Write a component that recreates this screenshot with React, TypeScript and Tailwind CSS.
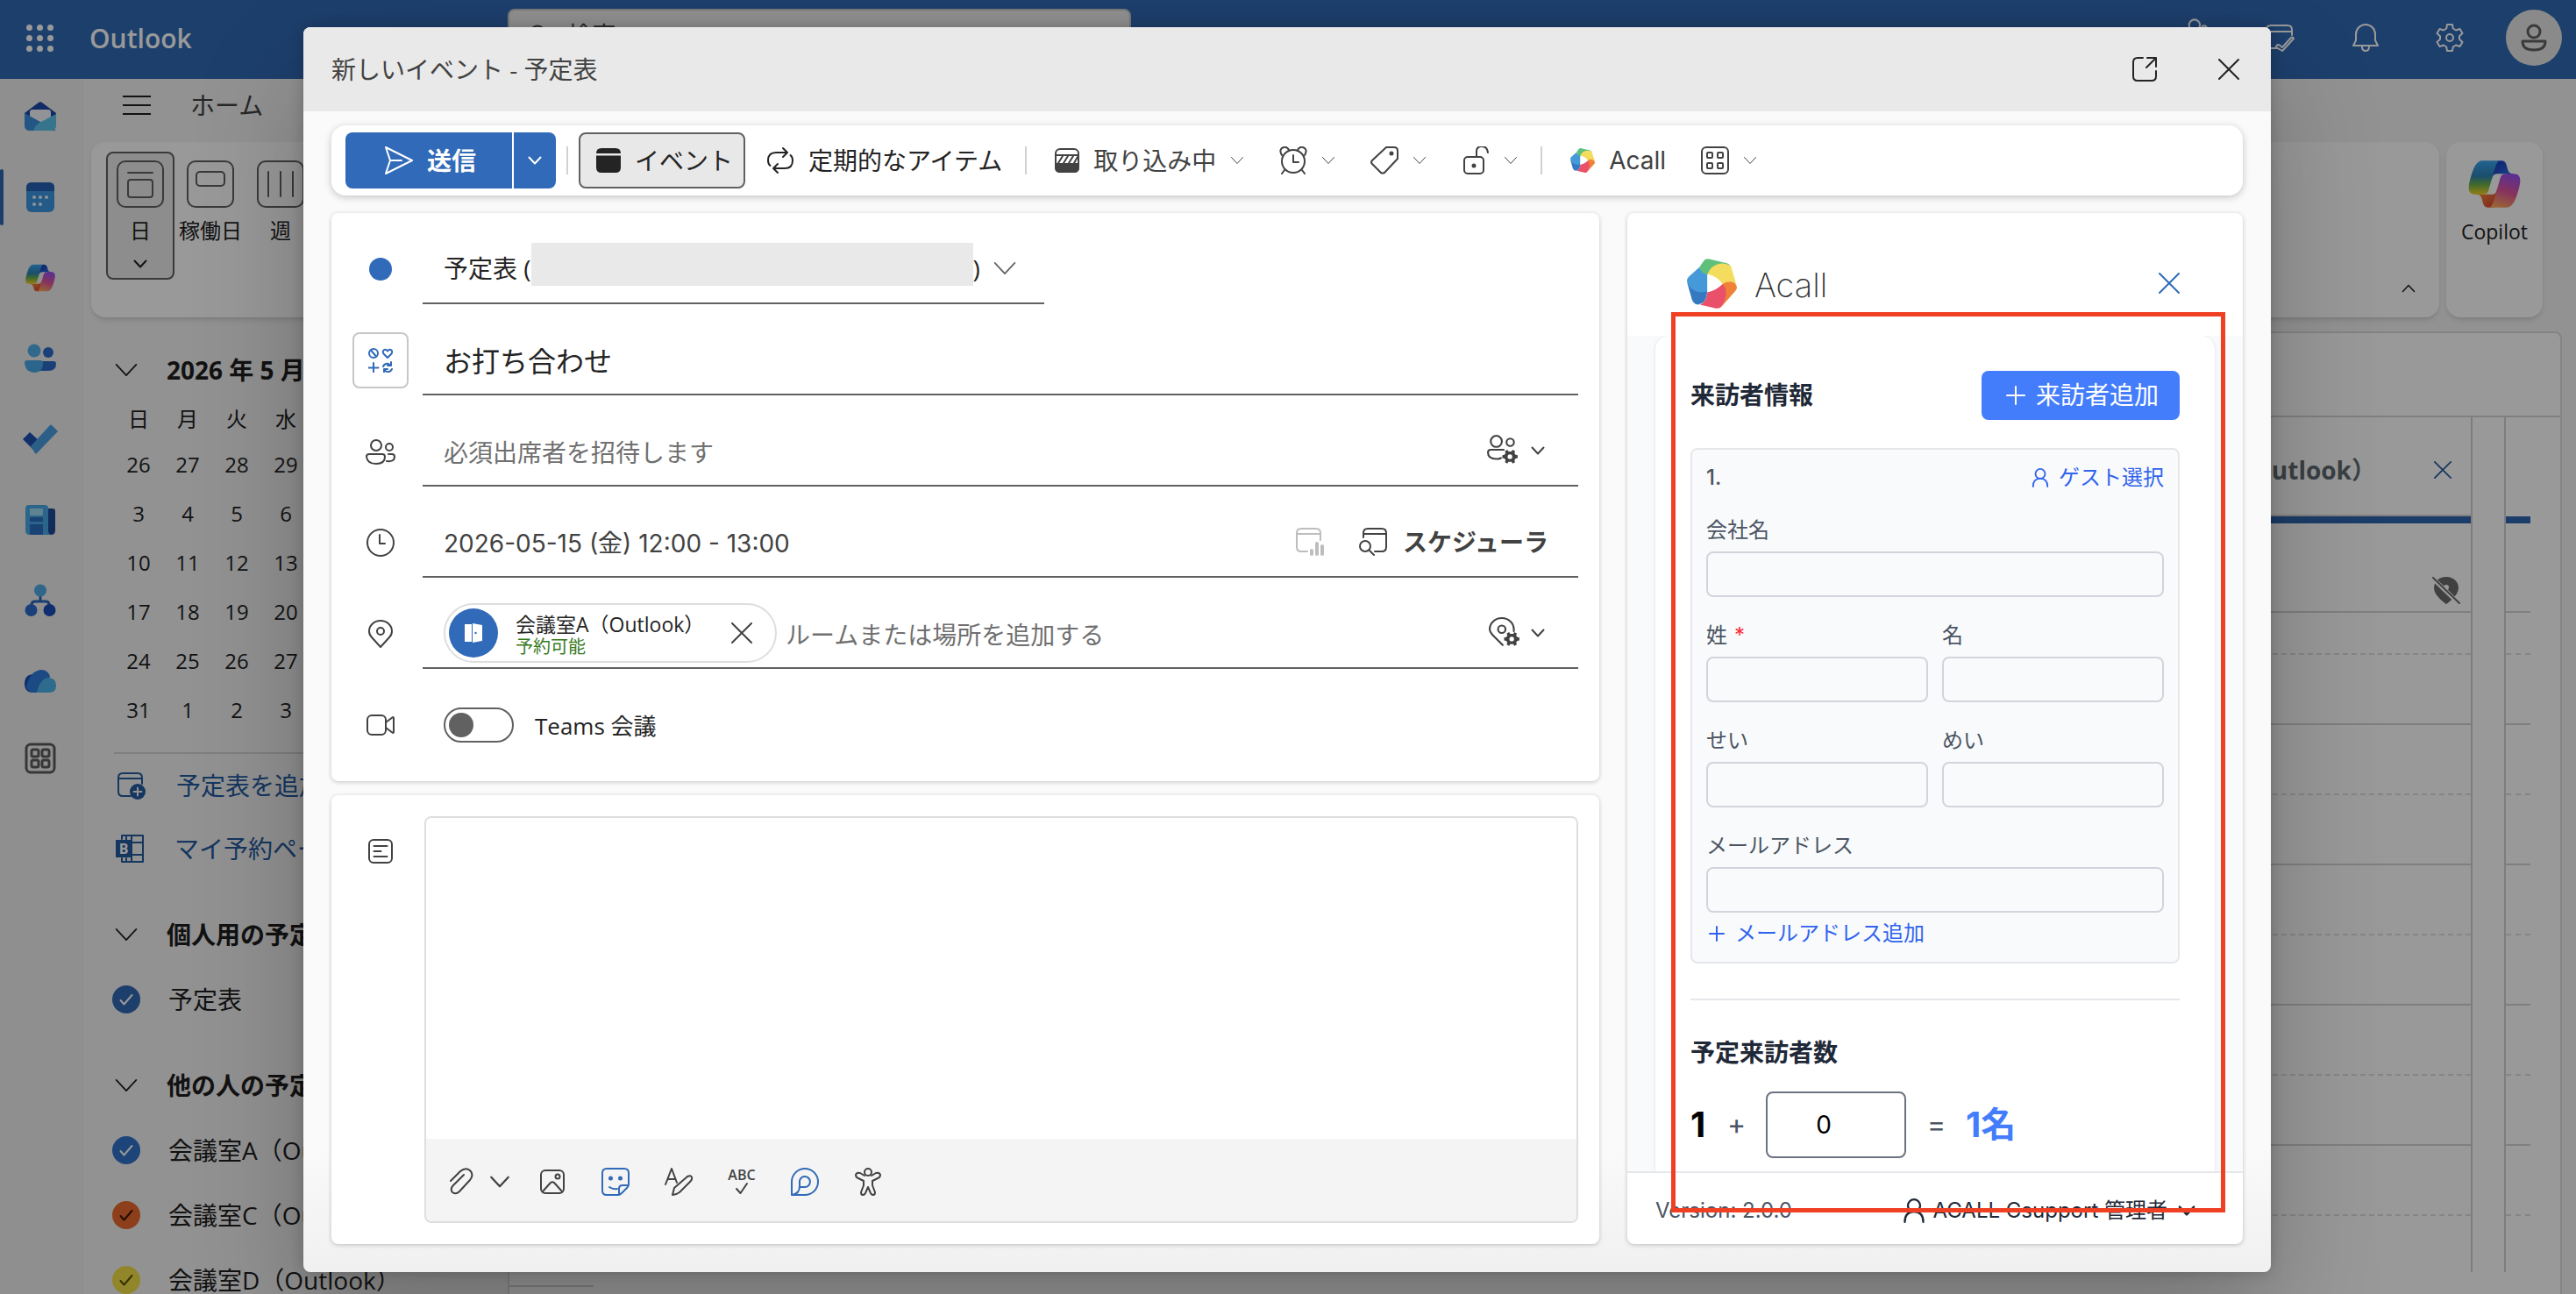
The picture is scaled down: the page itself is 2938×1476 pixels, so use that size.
import { useId, useState, type ReactNode } from "react";

type IconProps = { children: ReactNode; className?: string; sw?: number; box?: number };

/** Line icon drawn on a square grid, coloured by the current text colour. */
function Icon({ children, className = "size-8", sw = 2, box = 32 }: IconProps) {
  return (
    <svg
      viewBox={`0 0 ${box} ${box}`}
      className={`shrink-0 ${className}`}
      fill="none"
      stroke="currentColor"
      strokeWidth={sw}
      strokeLinecap="round"
      strokeLinejoin="round"
      aria-hidden="true"
    >
      {children}
    </svg>
  );
}

const Chevron = ({ className = "size-4", sw = 2 }: { className?: string; sw?: number }) => (
  <Icon className={className} box={16} sw={sw}>
    <path d="M1.5 4.5 8 11.5l6.5-7" />
  </Icon>
);

const Cross = ({ className = "size-6" }: { className?: string }) => (
  <Icon className={className} box={24}>
    <path d="m1 1 22 22M23 1 1 23" />
  </Icon>
);

/** Small solid cog that sits on the lower right corner of an icon. */
const Gear = () => (
  <g stroke="none">
    <path
      fill="currentColor"
      fillRule="evenodd"
      d="m22 16 1 2h3.500l1-2 2.700 1.500-.700 2.300 1.300 1.700 2.200.500v3l-2.200.500-1.300 1.700.700 2.300-2.700 1.500-1-2H23l-1 2-2.700-1.500.700-2.300-1.300-1.700-2.200-.500v-3l2.200-.500 1.300-1.700-.700-2.300zM24.700 21a2.500 2.500 0 1 0 0 5 2.500 2.500 0 0 0 0-5Z"
    />
  </g>
);

function CopilotLogo({ className }: { className: string }) {
  const id = useId().replace(/:/g, "");
  return (
    <svg viewBox="2 3 44 42" className={className} aria-hidden="true">
      <defs>
        <linearGradient id={`${id}a`} x1="0" y1="0" x2="0" y2="1">
          <stop offset="0" stopColor="#3aa5ee" />
          <stop offset=".45" stopColor="#2c83b8" />
          <stop offset=".7" stopColor="#6bb04a" />
          <stop offset="1" stopColor="#f5d327" />
        </linearGradient>
        <linearGradient id={`${id}b`} x1=".6" y1="0" x2=".3" y2="1">
          <stop offset="0" stopColor="#9a4ff0" />
          <stop offset=".5" stopColor="#e0559a" />
          <stop offset="1" stopColor="#ffa95c" />
        </linearGradient>
        <linearGradient id={`${id}c`} x1="1" y1="1" x2="0" y2="0">
          <stop offset="0" stopColor="#2f7de0" />
          <stop offset="1" stopColor="#1432b8" />
        </linearGradient>
        <linearGradient id={`${id}d`} x1="0" y1="0" x2="1" y2="1">
          <stop offset="0" stopColor="#f7a02d" />
          <stop offset="1" stopColor="#d93a3a" />
        </linearGradient>
      </defs>
      <path
        fill={`url(#${id}c)`}
        d="M34.14 7.325A4.63 4.63 0 0 0 29.7 4h-1.35a4.63 4.63 0 0 0-4.554 3.794L21.48 20.407l.575-1.965a4.63 4.63 0 0 1 4.444-3.33h7.853l3.294 1.282 3.175-1.283h-.926a4.63 4.63 0 0 1-4.443-3.325z"
      />
      <path
        fill={`url(#${id}d)`}
        d="M14.33 40.656A4.63 4.63 0 0 0 18.779 44h2.87a4.63 4.63 0 0 0 4.629-4.51l.312-12.163-.654 2.233a4.63 4.63 0 0 1-4.443 3.329h-7.919l-2.823-1.532-3.057 1.532h.912a4.63 4.63 0 0 1 4.447 3.344z"
      />
      <path
        fill={`url(#${id}a)`}
        d="M29.5 4H13.46c-4.583 0-7.332 6.057-9.165 12.113-2.172 7.177-5.013 16.775 3.208 16.775h6.925a4.63 4.63 0 0 0 4.455-3.358 2078 2078 0 0 1 4.971-17.156c.843-2.843 1.544-5.284 2.621-6.805C27.079 4.716 28.086 4 29.501 4"
      />
      <path
        fill={`url(#${id}b)`}
        d="M18.498 44h16.04c4.582 0 7.332-6.058 9.165-12.115 2.171-7.177 5.013-16.775-3.208-16.775h-6.926a4.63 4.63 0 0 0-4.454 3.358 2084 2084 0 0 1-4.972 17.16c-.842 2.842-1.544 5.283-2.62 6.803-.604.853-1.61 1.569-3.025 1.569"
      />
    </svg>
  );
}

function AcallLogo({ className }: { className: string }) {
  return (
    <svg viewBox="0 0 100 100" className={`shrink-0 ${className}`} aria-hidden="true">
      <path fill="#5fc07c" d="M25 17 34 4Q38-1 45 1L80 9Q84 10 86 14L60 26 41 32 30 36Z" />
      <path fill="#f4dc5e" d="M86 14Q87 10 90 22L99 52Q94 46 84 46L71 51Q62 36 41 31 47 14 66 10 78 8 86 14Z" />
      <path fill="#f08237" d="M71 51Q78 45 88 46 99 48 100 58 100 62 96 66L70 95Q66 100 62 99L60 70Z" />
      <path fill="#ea5069" d="M71 51Q79 57 78 72 77 86 68 96 63 101 56 99L26 92Q37 88 39 76L41 67Q58 64 71 51Z" />
      <path fill="#3579c1" d="M1 50 10 82Q14 92 22 92 36 90 39 76L41 64Z" />
      <path fill="#4599d8" d="M25 17Q28 30 41 32L41 66Q22 70 10 61 0 53 0 44 0 40 4 36Z" />
      <path fill="#fff" d="M41 31Q62 36 71 51 58 64 41 67Z" />
    </svg>
  );
}

/* ------------------------------ page behind the dialog ------------------------------ */

const railIcons: { label: string; art: ReactNode }[] = [
  {
    label: "メール",
    art: (
      <svg viewBox="0 0 36 34" className="h-[34px] w-9">
        <path fill="#1d48a8" d="M0 13 16 1q2-1.400 4 0l16 12v8H0z" />
        <path fill="#f4f6fb" d="M6 12q0-3 3-3h18q3 0 3 3v9l-12 6-12-6z" />
        <path fill="#3b8fdc" d="M0 13l36 20H6q-6 0-6-6z" />
        <path fill="#5bc4ea" d="M36 14v13q0 6-6 6H10q2-6 7-9z" />
      </svg>
    ),
  },
  {
    label: "予定表",
    art: (
      <svg viewBox="0 0 32 34" className="h-[34px] w-8">
        <rect width="32" height="34" rx="6" fill="#3d97e3" />
        <path fill="#2761b4" d="M0 10V6q0-6 6-6h20q6 0 6 6v4z" />
        <g fill="#eaf5ff">
          <circle cx="9" cy="17" r="2" />
          <circle cx="16" cy="17" r="2" />
          <circle cx="23" cy="17" r="2" />
          <circle cx="9" cy="25" r="2" />
          <circle cx="16" cy="25" r="2" />
        </g>
      </svg>
    ),
  },
  { label: "Copilot", art: <CopilotLogo className="h-8 w-[34px]" /> },
  {
    label: "連絡先",
    art: (
      <svg viewBox="0 0 36 34" className="h-[34px] w-9">
        <circle cx="27" cy="10" r="6" fill="#2a6dc9" />
        <path fill="#2a6dc9" d="M18 20h15q3 0 3 3 0 8-9 8h-9z" />
        <circle cx="11" cy="8" r="7.500" fill="#53b0ec" />
        <path fill="#4aa8e8" d="M3 19h15q3 0 3 3 0 11-10 11T0 22q0-3 3-3z" />
      </svg>
    ),
  },
  {
    label: "To Do",
    art: (
      <svg viewBox="0 0 40 34" className="h-[34px] w-10">
        <path fill="#1d4fae" d="m0 17 8-8 13 12-6 11z" />
        <path fill="#4a9fe2" d="m9 25 22-24q1-1 2 0l7 7-24 25q-1 1-2 0z" />
      </svg>
    ),
  },
  {
    label: "ニュース",
    art: (
      <svg viewBox="0 0 34 34" className="size-[34px]">
        <path fill="#1d4896" d="M22 4h9q3 0 3 3v22q0 5-5 5h-7z" />
        <path fill="#48a8e6" d="M0 4q0-4 4-4h18q4 0 4 4v25q0 4 3 5H5q-5 0-5-5z" />
        <rect x="5" y="4" width="15" height="8" rx="1" fill="#9ddcf5" />
        <rect x="5" y="14" width="15" height="5" rx="1" fill="#2a6fc4" />
        <rect x="5" y="22" width="15" height="12" rx="1" fill="#2a6fc4" />
      </svg>
    ),
  },
  {
    label: "組織図",
    art: (
      <svg viewBox="0 0 36 38" className="h-[38px] w-9">
        <path d="M18 14v6M8 27v-3q0-4 4-4h12q4 0 4 4v3" stroke="#2867bd" strokeWidth="3" fill="none" />
        <circle cx="18" cy="7.500" r="7" fill="#4fabe6" />
        <circle cx="7.500" cy="30" r="7" fill="#2b6ccb" />
        <circle cx="28.500" cy="30" r="7" fill="#1a4dbb" />
      </svg>
    ),
  },
  {
    label: "OneDrive",
    art: (
      <svg viewBox="0 0 36 26" className="h-[26px] w-9">
        <path fill="#1b4bb5" d="M0 16Q0 5 11 5l6 6-9 15Q0 25 0 16z" />
        <path fill="#2f7ddd" d="M2 20Q6 1 19 0q8 0 10 8L16 26H9q-5-1-7-6z" />
        <path fill="#4db2ea" d="M14 26q4-17 14-17 8 1 8 9 0 8-8 8z" />
      </svg>
    ),
  },
  {
    label: "アプリ",
    art: (
      <svg viewBox="0 0 36 36" className="size-9" fill="none" stroke="#5c5c5c" strokeWidth="3">
        <rect x="2" y="2" width="32" height="32" rx="5" />
        <rect x="8" y="8" width="8" height="8" rx="2" />
        <rect x="20" y="8" width="8" height="8" rx="2" />
        <rect x="8" y="20" width="8" height="8" rx="2" />
        <rect x="20" y="20" width="8" height="8" rx="2" />
      </svg>
    ),
  },
];

function TopBar() {
  return (
    <header className="flex h-[90px] shrink-0 items-center bg-[#3169b5] pb-1 text-white">
      <button type="button" aria-label="アプリ起動ツール" className="ml-[30px] grid grid-cols-3 gap-[5px]">
        {Array.from({ length: 9 }, (_, i) => (
          <span key={i} className="size-[7px] rounded-full bg-white" />
        ))}
      </button>
      <h1 className="ml-[41px] w-[477px] text-[30px] font-semibold">Outlook</h1>
      <label className="mt-[10px] flex h-[60px] w-[711px] items-center gap-5 self-start rounded-lg border-2 border-[#c8c8c8] bg-[#efefef] px-[22px] text-[#424242]">
        <Icon className="size-6" box={24}>
          <circle cx="10" cy="10" r="8.500" />
          <path d="m16 16 7 7" />
        </Icon>
        <input
          type="search"
          placeholder="検索"
          aria-label="検索"
          className="w-full bg-transparent text-[28px] outline-none placeholder:text-[#424242]"
        />
      </label>
      <div className="ml-auto flex items-center gap-16 pr-4">
        <button type="button" aria-label="Teams">
          <Icon className="size-11" sw={1.5}>
            <circle cx="21" cy="5.500" r="4.500" />
            <circle cx="29" cy="8" r="2" />
            <path d="M14 13h14v8q-7 8-14 0z" />
          </Icon>
        </button>
        <button type="button" aria-label="今日の予定">
          <Icon className="h-8 w-9">
            <path d="M14 28H6q-5 0-5-5V7q0-5 5-5h19q5 0 5 5v6M1 9h29" />
            <path d="m15 24 4 3L29 16q2-1 3 1L21 29l-2 2-7-4q0-3 3-3z" />
          </Icon>
        </button>
        <button type="button" aria-label="通知">
          <Icon>
            <path d="M2 25h28l-3-6v-7a11 11 0 0 0-22 0v7zM12 26q0 5 4 5t4-5" />
          </Icon>
        </button>
        <button type="button" aria-label="設定">
          <Icon>
            <circle cx="16" cy="16" r="4" />
            <path d="m13 1-.800 4.500L9 7.500 4.500 6l-3 5L5 14.200v3.600L1.500 21l3 5 4.500-1.500 3.200 2L13 31h6l.800-4.500 3.200-2 4.500 1.500 3-5-3.500-3.200v-3.600L30.500 11l-3-5L23 7.500l-3.200-2L19 1z" />
          </Icon>
        </button>
        <button
          type="button"
          aria-label="アカウント"
          className="-ml-4 flex size-16 items-center justify-center rounded-full bg-[#e6e6e6] text-[#616161]"
        >
          <Icon className="size-8" sw={3}>
            <circle cx="16" cy="9" r="7" />
            <path d="M3 20h26q0 10-13 10T3 20z" />
          </Icon>
        </button>
      </div>
    </header>
  );
}

function ViewButton({ label, active, children }: { label: string; active?: boolean; children: ReactNode }) {
  return (
    <button
      type="button"
      className={
        active
          ? "flex h-[146px] w-[78px] flex-col items-center rounded-lg border-2 border-[#616161] bg-[#ebebeb] pt-2"
          : "flex h-[146px] w-[78px] flex-col items-center border-y-2 border-transparent pt-2"
      }
    >
      <span className="text-[#616161]">
        <Icon className="size-[54px]" box={54}>
          <rect x="1" y="1" width="52" height="52" rx="9" />
          {children}
        </Icon>
      </span>
      <span className="mt-2.5 text-2xl leading-8 whitespace-nowrap">{label}</span>
      {active && <Chevron className="mt-3.5 size-4" />}
    </button>
  );
}

function Ribbon() {
  return (
    <div className="flex h-[200px] shrink-0 gap-2 pr-[38px] pl-2">
      <div className="flex flex-1 justify-between rounded-2xl bg-white shadow-md">
        <div className="flex gap-0.5 pt-[11px] pl-[17px]">
          <ViewButton label="日" active>
            <path d="M13 14h28" />
            <rect x="13" y="22" width="28" height="20" rx="3" />
          </ViewButton>
          <ViewButton label="稼働日">
            <rect x="11" y="13" width="32" height="16" rx="4" />
          </ViewButton>
          <ViewButton label="週">
            <path d="M13 13v28M27 13v28M41 13v28" />
          </ViewButton>
        </div>
        <button type="button" aria-label="リボンを折りたたむ" className="mr-[27px] mb-[25px] rotate-180 self-end">
          <Chevron sw={1.5} />
        </button>
      </div>
      <button type="button" className="flex w-[110px] flex-col items-center rounded-2xl bg-white pt-5 shadow-md">
        <CopilotLogo className="h-[56px] w-[60px]" />
        <span className="mt-2 text-[23px] leading-9">Copilot</span>
      </button>
    </div>
  );
}

const weekdays = ["日", "月", "火", "水", "木", "金", "土"];
const weeks = [
  [26, 27, 28, 29, 30, 1, 2],
  [3, 4, 5, 6, 7, 8, 9],
  [10, 11, 12, 13, 14, 15, 16],
  [17, 18, 19, 20, 21, 22, 23],
  [24, 25, 26, 27, 28, 29, 30],
  [31, 1, 2, 3, 4, 5, 6],
];

function CalendarEntry({ name, color, mark }: { name: string; color: string; mark: string }) {
  return (
    <label className="flex h-[74px] shrink-0 items-center gap-8 pl-6">
      <input type="checkbox" defaultChecked className="peer sr-only" />
      <span className={`flex size-8 items-center justify-center rounded-full ${color} ${mark}`}>
        <Icon className="size-4" box={16}>
          <path d="m1.500 9 4 4.500L14.500 3" />
        </Icon>
      </span>
      <span className="whitespace-nowrap">{name}</span>
    </label>
  );
}

function GroupHeader({ name, className }: { name: string; className: string }) {
  return (
    <button type="button" className={`flex shrink-0 items-center gap-8 pl-[26px] font-bold ${className}`}>
      <Chevron className="size-7" sw={1} />
      <span className="whitespace-nowrap">{name}</span>
    </button>
  );
}

function Sidebar() {
  return (
    <aside className="flex w-[483px] shrink-0 flex-col pl-2 text-[28px] text-[#1f1f1f]">
      <GroupHeader name="2026 年 5 月" className="h-[76px] pt-3" />
      <table className="ml-[26px] w-[392px] shrink-0 table-fixed text-center text-2xl">
        <thead>
          <tr className="h-12">
            {weekdays.map((d) => (
              <th key={d} className="p-0 font-normal">{d}</th>
            ))}
          </tr>
        </thead>
        <tbody>
          {weeks.map((w, i) => (
            <tr key={i} className="h-14">
              {w.map((d, j) => (
                <td key={j} className="p-0">{d}</td>
              ))}
            </tr>
          ))}
        </tbody>
      </table>
      <hr className="mt-5 mr-4 ml-[26px] border-t-2 border-[#d4d4d4]" />
      <a href="#add" className="flex h-[72px] shrink-0 items-center gap-[35px] pl-[30px] text-[#245a9f]">
        <Icon>
          <path d="M15 28H6q-5 0-5-5V7q0-5 5-5h17q5 0 5 5v7M1 8h27" />
          <circle cx="23" cy="23" r="9" fill="currentColor" stroke="none" />
          <path d="M23 18.500v9M18.500 23h9" stroke="#f3f3f3" />
        </Icon>
        <span className="whitespace-nowrap">予定表を追加</span>
      </a>
      <a href="#bookings" className="flex h-[72px] shrink-0 items-center gap-[35px] pl-7 text-[#245a9f]">
        <span className="relative">
          <Icon>
            <path d="M7 5V1h24v30H7v-4M12 1v5M18 1v30M12 27v4M18 9h13M18 23h13" />
          </Icon>
          <span className="absolute top-1.5 left-0 flex h-5 w-[18px] items-center justify-center bg-[#245a9f] text-[16px] leading-5 font-bold text-white">
            B
          </span>
        </span>
        <span className="whitespace-nowrap">マイ予約ページ</span>
      </a>
      <GroupHeader name="個人用の予定表" className="mt-[25px] h-[74px]" />
      <CalendarEntry name="予定表" color="bg-[#3169b5]" mark="text-white" />
      <GroupHeader name="他の人の予定表" className="mt-6 h-[74px]" />
      <CalendarEntry name="会議室A（Outlook）" color="bg-[#3273cc]" mark="text-white" />
      <CalendarEntry name="会議室C（Outlook）" color="bg-[#ea6a2c]" mark="text-[#3d1400]" />
      <CalendarEntry name="会議室D（Outlook）" color="bg-[#f4df48]" mark="text-[#5a5000]" />
    </aside>
  );
}

function DayColumn({ children, className }: { children?: ReactNode; className: string }) {
  return (
    <div className={`flex flex-col border-[#d0d0d0] ${className}`}>
      {children}
      <div className="h-12 shrink-0 border-b-2 border-dashed border-[#dedede]" />
      {[0, 1, 2, 3].map((i) => (
        <div key={i} className="shrink-0">
          <div className="h-20 border-b-2 border-[#d4d4d4]" />
          <div className="h-20 border-b-2 border-dashed border-[#dedede]" />
        </div>
      ))}
    </div>
  );
}

function CalendarGrid() {
  return (
    <main className="mr-4 flex flex-1 flex-col rounded-t-lg border-2 border-b-0 border-[#dcdcdc] bg-white">
      <div className="h-[96px] shrink-0 border-b-2 border-[#d4d4d4]" />
      <div className="flex min-h-0 flex-1 overflow-hidden">
        <DayColumn className="flex-1 border-r-2">
          <div className="flex h-[113px] shrink-0 items-center justify-end gap-[66px] border-b-2 border-[#d4d4d4] pt-2 pr-[22px] text-[28px] font-bold text-[#616b70]">
            <span className="whitespace-nowrap">（Outlook）</span>
            <button type="button" aria-label="予定表を閉じる" className="text-[#245a9f]">
              <Cross className="size-5" />
            </button>
          </div>
          <div className="flex h-[110px] shrink-0 items-end justify-end border-t-8 border-b-2 border-t-[#2f66b0] border-b-[#d4d4d4] pr-3 pb-2 text-[#6b6b6b]">
            <Icon>
              <path
                fill="currentColor"
                d="M16 2C8 2 3 7 3 14c0 6 5 11 13 17 8-6 13-11 13-17 0-7-5-12-13-12z"
              />
              <circle cx="16" cy="13" r="4" fill="#fff" />
              <path d="m2 4 28 27" stroke="#fff" strokeWidth="5" />
              <path d="m1 2 30 29" />
            </Icon>
          </div>
        </DayColumn>
        <div className="w-9" />
        <DayColumn className="mr-[34px] w-[30px] overflow-hidden border-l-2">
          <div className="h-[113px] shrink-0" />
          <div className="h-[110px] shrink-0 border-t-8 border-b-2 border-t-[#2f66b0] border-b-[#d4d4d4]" />
        </DayColumn>
      </div>
      <div className="h-[25px] shrink-0">
        <div className="h-[17px] w-24 border-b-2 border-[#d4d4d4]" />
      </div>
    </main>
  );
}

function Page() {
  return (
    <div className="flex h-full flex-col overflow-hidden bg-[#f3f3f3]">
      <TopBar />
      <div className="flex min-h-0 flex-1">
        <nav className="w-24 shrink-0 bg-[#eeeeee]">
          {railIcons.map(({ label, art }, i) => (
            <a
              key={label}
              href="#rail"
              aria-label={label}
              className={
                i === railIcons.length - 1
                  ? "flex h-[84px] items-center justify-center pr-1 pb-1.5"
                  : "flex h-[92px] items-center justify-center pr-1 pb-1.5"
              }
            >
              <span className={i === 1 ? "mr-[26px] -ml-[30px] h-16 w-1 rounded bg-[#2f66b0]" : "hidden"} />
              {art}
            </a>
          ))}
        </nav>
        <div className="flex min-w-0 flex-1 flex-col">
          <div className="flex h-[72px] shrink-0 items-center pb-3 pl-11">
            <button type="button" aria-label="ナビゲーション" className="flex w-8 flex-col gap-2">
              <span className="h-0.5 bg-[#1f1f1f]" />
              <span className="h-0.5 bg-[#1f1f1f]" />
              <span className="h-0.5 bg-[#1f1f1f]" />
            </button>
            <button type="button" className="ml-[45px] text-[28px] text-[#424242]">ホーム</button>
          </div>
          <Ribbon />
          <div className="mt-4 flex min-h-0 flex-1">
            <Sidebar />
            <CalendarGrid />
          </div>
        </div>
      </div>
    </div>
  );
}

/* ------------------------------------- dialog -------------------------------------- */

const Divider = ({ className }: { className: string }) => <span className={`h-8 w-0.5 bg-[#d1d1d1] ${className}`} />;

function Toolbar() {
  return (
    <div className="flex h-20 shrink-0 items-center rounded-2xl bg-white px-4 text-[28px] text-[#424242] shadow-[0_2px_8px_rgba(0,0,0,0.22)]">
      <div className="flex h-16 w-60 overflow-hidden rounded-lg bg-[#316ab8] text-white">
        <button type="button" className="flex flex-1 items-center justify-center gap-4 pl-1 font-bold">
          <Icon>
            <path d="m1 1 30 15L1 31l5-15zM6 16h13" />
          </Icon>
          送信
        </button>
        <button
          type="button"
          aria-label="送信オプション"
          className="flex w-[50px] items-center justify-center border-l-2 border-white"
        >
          <Chevron />
        </button>
      </div>
      <Divider className="mx-3" />
      <button
        type="button"
        aria-pressed="true"
        className="flex h-16 w-[190px] items-center gap-4 rounded-lg border-2 border-[#616161] bg-[#e8e8e8] pl-[18px] text-[#242424]"
      >
        <Icon className="size-7" box={28}>
          <path fill="currentColor" stroke="none" d="M0 6q0-6 6-6h16q6 0 6 6zM0 8.500h28V22q0 6-6 6H6q-6 0-6-6z" />
        </Icon>
        イベント
      </button>
      <button type="button" className="ml-6 flex items-center gap-4 text-[#242424]">
        <Icon>
          <path d="m19 2 5 5-5 5M23 7H11q-9 0-9 9 0 4 2.500 6M13 20l-5 5 5 5M9 25h12q9 0 9-9 0-4-2.500-6" />
        </Icon>
        定期的なアイテム
      </button>
      <Divider className="ml-[26px]" />
      <button type="button" className="ml-8 flex items-center gap-4">
        <Icon className="size-7" box={28}>
          <rect x="1" y="1" width="26" height="26" rx="5" />
          <path d="M1 8h26" />
          <path fill="currentColor" d="M1 18h26v4q0 5-5 5H6q-5 0-5-5z" />
          <path d="m4 17 5-8M10 17l5-8M16 17l5-8M22 17l4-7" />
        </Icon>
        取り込み中
        <Chevron className="size-4" sw={1} />
      </button>
      <button type="button" aria-label="アラーム" className="ml-10 flex items-center gap-4">
        <Icon>
          <circle cx="16" cy="17" r="13" />
          <path d="M16 10v8h6M6 27l-3 4M26 27l3 4M3 10Q-1 3 5 1q4-1 6 3M29 10q4-7-2-9-4-1-6 3" />
        </Icon>
        <Chevron sw={1} />
      </button>
      <button type="button" aria-label="分類" className="ml-10 flex items-center gap-4">
        <Icon>
          <path d="M18 1h9q4 0 4 4v9L16 30q-2 1-4 0L2 20q-2-2 0-4z" />
          <circle cx="24" cy="8" r="1.500" fill="currentColor" />
        </Icon>
        <Chevron sw={1} />
      </button>
      <button type="button" aria-label="公開範囲" className="ml-10 flex items-center gap-4">
        <Icon>
          <rect x="3" y="12" width="22" height="19" rx="4" />
          <path d="M17 12V6q0-6 6-6t7 7" />
          <circle cx="14" cy="22" r="1.500" fill="currentColor" />
        </Icon>
        <Chevron sw={1} />
      </button>
      <Divider className="ml-[26px]" />
      <button type="button" className="ml-8 flex items-center gap-4 font-[Inter,sans-serif]">
        <AcallLogo className="size-7" />
        Acall
      </button>
      <button type="button" aria-label="アプリ" className="ml-10 flex items-center gap-4">
        <Icon>
          <rect x="1" y="1" width="30" height="30" rx="5" />
          <rect x="7" y="7" width="6" height="6" rx="1" />
          <rect x="19" y="7" width="6" height="6" rx="1" />
          <rect x="7" y="19" width="6" height="6" rx="1" />
          <rect x="19" y="19" width="6" height="6" rx="1" />
        </Icon>
        <Chevron sw={1} />
      </button>
    </div>
  );
}

function FormRow({ icon, children, line = "flex-1 border-b-2" }: { icon: ReactNode; children: ReactNode; line?: string }) {
  return (
    <div className="flex h-[104px]">
      <div className="flex w-[104px] items-center justify-center pt-6 pr-0.5 pl-2.5">{icon}</div>
      <div className={`flex items-center border-[#616161] pt-6 pr-[38px] pl-6 ${line}`}>{children}</div>
    </div>
  );
}

const fieldText = "min-w-0 flex-1 bg-transparent pt-1 outline-none placeholder:text-[#707070]";

function EventForm() {
  const [teams, setTeams] = useState(false);
  return (
    <section className="rounded-lg bg-white pr-6 pb-6 text-[28px] text-[#424242] shadow-[0_1px_5px_rgba(0,0,0,0.22)]">
      <FormRow icon={<span className="size-[26px] rounded-full bg-[#316ab8]" />} line="w-[709px] border-b-2">
        <button type="button" className="flex items-center whitespace-nowrap text-[#242424]">
          <span>予定表 (</span>
          <span className="-mt-2.5 h-[49px] w-[504px] shrink-0 bg-[#e9e9e9]" />
          <span>)</span>
          <Chevron className="ml-3.5 size-7 text-[#616161]" sw={1} />
        </button>
      </FormRow>
      <FormRow
        icon={
          <button
            type="button"
            aria-label="チャーム"
            className="flex size-16 shrink-0 items-center justify-center rounded-lg border-2 border-[#c7c7c7] text-[#316ab8]"
          >
            <Icon className="size-7" box={28}>
              <circle cx="6" cy="6" r="5" />
              <path d="m3 2.500 6 7M22 11l-4.500-4.500Q16 4 17.500 2.500 20 .500 22 3.500 24 .500 26.500 2.500 28 4 26.500 6.500zM6 17v11M.500 22.500h11M17 21q2-4 6-3l3 2M26 16v4h-4M27 24q-2 4-6 3l-3-2M18 28v-4h4" />
            </Icon>
          </button>
        }
      >
        <input aria-label="タイトル" defaultValue="お打ち合わせ" className={`${fieldText} text-[32px] text-[#242424]`} />
      </FormRow>
      <FormRow
        icon={
          <Icon className="size-9" box={36}>
            <circle cx="13" cy="11" r="6" />
            <circle cx="28" cy="13" r="4" />
            <path d="M5 21h15q3 0 3 3 0 8-10 8T2 24q0-3 3-3zM27 21h4q3 0 3 3 0 6-9 5" />
          </Icon>
        }
      >
        <input aria-label="必須出席者" placeholder="必須出席者を招待します" className={fieldText} />
        <button type="button" aria-label="出席者オプション" className="flex items-center gap-3.5">
          <Icon className="size-9" box={34}>
            <circle cx="10" cy="7" r="6" />
            <circle cx="25" cy="8" r="4" />
            <path d="M18 16H4q-3 0-3 3 0 7 9 7 3 0 5-1" />
            <Gear />
          </Icon>
          <Chevron />
        </button>
      </FormRow>
      <FormRow
        icon={
          <Icon>
            <circle cx="16" cy="16" r="15" />
            <path d="M15 7v10h6" />
          </Icon>
        }
      >
        <button type="button" className="flex-1 pt-1 text-left font-[Inter,'Noto_Sans_CJK_JP',sans-serif]">
          2026-05-15 (金) 12:00 - 13:00
        </button>
        <button type="button" aria-label="空き状況" disabled className="text-[#bdbdbd]">
          <Icon>
            <path d="M13 27H6q-5 0-5-5V6q0-5 5-5h17q5 0 5 5v8M1 7h27" />
            <path d="M18 26v4M24 18v12M30 21v9" strokeWidth="4" />
          </Icon>
        </button>
        <button type="button" className="ml-10 flex items-center gap-[18px] font-bold">
          <Icon>
            <path d="M5 11V6q0-5 5-5h16q5 0 5 5v16q0 5-5 5h-8M5 7h26" />
            <circle cx="7" cy="21" r="6" />
            <path d="m12 26 5 5" />
          </Icon>
          <span className="-mr-1">スケジューラ</span>
        </button>
      </FormRow>
      <FormRow
        icon={
          <Icon>
            <path d="M16 31 6 20Q3 17 3 13a13 12 0 0 1 26 0q0 4-3 7z" />
            <circle cx="16" cy="13" r="4" />
          </Icon>
        }
      >
        <div className="flex h-[68px] w-[380px] shrink-0 items-center rounded-full border-2 border-[#dedede] pr-[26px] pl-1">
          <span className="flex size-14 items-center justify-center rounded-full bg-[#316ab8]">
            <svg viewBox="0 0 20 22" className="h-[22px] w-5" aria-hidden="true">
              <path fill="#fff" d="M0 1h8v20H0z" />
              <path fill="#fff" d="m9 0 11 2v18L9 22z" />
              <circle cx="12.500" cy="11" r="1.200" fill="#316ab8" />
            </svg>
          </span>
          <span className="ml-5 flex flex-1 flex-col pt-1 whitespace-nowrap">
            <span className="text-[23px] leading-7 text-[#242424]">会議室A（Outlook）</span>
            <span className="text-xl leading-6 text-[#37791c]">予約可能</span>
          </span>
          <button type="button" aria-label="会議室を削除">
            <Cross />
          </button>
        </div>
        <input aria-label="場所" placeholder="ルームまたは場所を追加する" className={`${fieldText} ml-2.5`} />
        <button type="button" aria-label="場所オプション" className="flex items-center gap-3">
          <Icon className="size-9" box={34}>
            <path d="M15 30 5 20Q1 16 1 13a13 12 0 0 1 26 0v2" />
            <circle cx="14" cy="13" r="4" />
            <Gear />
          </Icon>
          <Chevron />
        </button>
      </FormRow>
      <FormRow
        line="flex-1"
        icon={
          <Icon>
            <rect x="1" y="5" width="21" height="22" rx="5" />
            <path d="m22 13 8-6q1 0 1 1v16q0 1-1 1l-8-6" />
          </Icon>
        }
      >
        <input
          id="teams"
          type="checkbox"
          role="switch"
          checked={teams}
          onChange={(e) => setTeams(e.target.checked)}
          className="flex h-10 w-20 shrink-0 appearance-none items-center rounded-full border-2 border-[#616161] px-1 before:size-7 before:rounded-full before:bg-[#616161] checked:justify-end"
        />
        <label htmlFor="teams" className="ml-6 pt-0.5 text-[26px] text-[#242424]">Teams 会議</label>
      </FormRow>
    </section>
  );
}

const editorTools: { label: string; blue?: boolean; art: ReactNode }[] = [
  {
    label: "画像",
    art: (
      <>
        <rect x="3" y="3" width="26" height="26" rx="5" />
        <circle cx="22" cy="10" r="2.500" />
        <path d="m5 27 9-10q2-1.500 4 0l9 10" />
      </>
    ),
  },
  {
    label: "ステッカー",
    blue: true,
    art: (
      <>
        <path d="M19 31H6q-5 0-5-5V6q0-5 5-5h20q5 0 5 5v13q0 2-2 4l-6 6q-2 2-4 2zM20 30v-6q0-4 4-4h6" />
        <path d="M9 22q4 3 9 2" />
        <circle cx="10.500" cy="12" r="1.500" fill="currentColor" />
        <circle cx="21.500" cy="12" r="1.500" fill="currentColor" />
      </>
    ),
  },
  {
    label: "書式",
    art: (
      <>
        <path d="M1 19 8 1l6 16M4 13h8" />
        <path d="m9 31 2-8 15-13q4-2 5 1 1 2-2 5L17 28q-4 3-8 3z" />
      </>
    ),
  },
];

function Editor() {
  return (
    <section className="flex min-h-0 flex-1 rounded-lg bg-white pt-6 pr-6 pb-6 text-[#424242] shadow-[0_1px_5px_rgba(0,0,0,0.22)]">
      <div className="flex w-[106px] justify-center pt-[24px] pl-[6px]">
        <Icon>
          <rect x="3" y="3" width="26" height="26" rx="5" />
          <path d="M8.500 10h15M8.500 16h8M8.500 22h15" />
        </Icon>
      </div>
      <div className="flex flex-1 flex-col overflow-hidden rounded-lg border-2 border-[#dedede]">
        <textarea aria-label="本文" className="w-full flex-1 resize-none bg-white p-6 text-[28px] outline-none" />
        <div className="flex h-[94px] items-center bg-[#f4f4f4] pt-1 pl-6">
          <button type="button" aria-label="添付" className="flex items-center gap-4">
            <Icon>
              <path d="m4 15 11-11q6-5 11-1 5 5 0 11L14 27q-4 4-8 1-3-4 1-8l12-12" />
            </Icon>
            <Chevron className="size-6" sw={1.5} />
          </button>
          <div className="ml-8 flex items-center gap-10">
            {editorTools.map(({ label, blue, art }) => (
              <button key={label} type="button" aria-label={label} className={blue ? "text-[#316ab8]" : ""}>
                <Icon>{art}</Icon>
              </button>
            ))}
            <button type="button" aria-label="スペルチェック" className="flex w-8 flex-col items-center">
              <span className="text-[16px] leading-4 font-semibold">ABC</span>
              <Icon className="size-4" box={16}>
                <path d="m2 8 4.500 5L14 2" />
              </Icon>
            </button>
            <button type="button" aria-label="Loop" className="text-[#316ab8]">
              <Icon>
                <path d="M1 31V16A15 15 0 1 1 16 31zq9-1 9-10v-4a6 6 0 1 1 6 5h-5" />
              </Icon>
            </button>
            <button type="button" aria-label="アクセシビリティ">
              <Icon>
                <circle cx="16" cy="5" r="4" />
                <path d="M12 9 7 6Q3 5 2 8q0 3 3 4l6 3v5L8 28q0 3 2 3t3-2l3-7 3 7q1 2 3 2t2-3l-3-8v-5l6-3q3-1 3-4-1-3-5-2l-5 3" />
              </Icon>
            </button>
          </div>
        </div>
      </div>
    </section>
  );
}

function Field({ label, required }: { label: string; required?: boolean }) {
  const id = useId();
  return (
    <div className="flex min-w-0 flex-1 flex-col">
      <label htmlFor={id} className="h-8 leading-8">
        {label}
        {required && <span className="ml-2 text-red-500">*</span>}
      </label>
      <input id={id} className="mt-2 h-[52px] w-full rounded-lg border-2 border-[#d1d5db] bg-transparent px-3 outline-none" />
    </div>
  );
}

const UserIcon = ({ className, sw = 2 }: { className: string; sw?: number }) => (
  <Icon className={className} box={24} sw={sw}>
    <circle cx="12" cy="7" r="6" />
    <path d="M3 23q0-10 9-10t9 10" />
  </Icon>
);

function AcallPanel() {
  return (
    <aside className="relative flex w-[702px] shrink-0 flex-col overflow-hidden rounded-lg bg-white font-[Inter,'Noto_Sans_CJK_JP',sans-serif] shadow-[0_1px_5px_rgba(0,0,0,0.22)]">
      <div className="flex h-[140px] shrink-0 items-center pt-5 pr-[72px] pl-[68px]">
        <AcallLogo className="size-[57px]" />
        <h2 className="ml-5 pt-1 text-[38px] font-extralight text-[#333]">Acall</h2>
        <button type="button" aria-label="閉じる" className="ml-auto text-[#316ab8]">
          <Cross />
        </button>
      </div>
      <div className="min-h-0 flex-1 overflow-hidden bg-[#f8fafc] px-8">
        <div className="h-full rounded-t-2xl bg-white px-10 pt-10 shadow-[0_1px_4px_rgba(0,0,0,0.12)]">
          <div className="flex h-14 items-center justify-between">
            <h3 className="text-[28px] font-bold text-[#1f2937]">来訪者情報</h3>
            <button
              type="button"
              className="flex h-14 items-center gap-3 rounded-lg bg-[#447dfc] pr-6 pl-7 text-[28px] text-white"
            >
              <Icon className="size-[22px]" box={22}>
                <path d="M11 1v20M1 11h20" />
              </Icon>
              来訪者追加
            </button>
          </div>
          <div className="mt-8 rounded-lg border-2 border-[#e5e7eb] bg-[#f9fafc] p-4 text-2xl text-[#4b5563]">
            <div className="flex h-8 items-center justify-between">
              <span className="font-medium">1.</span>
              <button type="button" className="flex items-center gap-2.5 leading-8 text-[#3164ee]">
                <UserIcon className="size-[22px]" />
                ゲスト選択
              </button>
            </div>
            <div className="mt-7 flex flex-col gap-7">
              <Field label="会社名" />
              <div className="flex gap-4">
                <Field label="姓" required />
                <Field label="名" />
              </div>
              <div className="flex gap-4">
                <Field label="せい" />
                <Field label="めい" />
              </div>
              <Field label="メールアドレス" />
            </div>
            <button type="button" className="mt-2 flex h-8 items-center gap-3 pl-[3px] leading-8 text-[#3164ee]">
              <Icon className="size-[18px]" box={18}>
                <path d="M9 1v16M1 9h16" />
              </Icon>
              メールアドレス追加
            </button>
          </div>
          <hr className="mt-10 border-t-2 border-[#e5e7eb]" />
          <h3 className="mt-11 text-[28px] leading-8 font-bold text-[#1f2937]">予定来訪者数</h3>
          <div className="mt-7 flex h-[76px] items-center text-[40px] font-bold">
            <span className="w-[42px] text-black">1</span>
            <span className="w-11 text-[32px] font-normal text-[#4b5563]">+</span>
            <input
              aria-label="追加の来訪者数"
              defaultValue="0"
              className="h-[76px] w-40 rounded-lg border-2 border-[#6b7280] pr-7 text-center text-[28px] font-normal text-black outline-none"
            />
            <span className="ml-6 w-[44px] text-[32px] font-normal text-[#4b5563]">=</span>
            <span className="text-[#447dfc]">1名</span>
          </div>
        </div>
      </div>
      <footer className="flex h-[83px] shrink-0 items-center justify-between border-t-2 border-[#e5e7eb] pt-1 pr-[54px] pl-8 text-2xl">
        <span className="text-[#4b5563]">Version: 2.0.0</span>
        <button type="button" className="flex items-center gap-2 text-[#1f2937]">
          <UserIcon className="size-7" />
          <span>ACALL Csupport 管理者</span>
          <Chevron className="ml-1 size-5" />
        </button>
      </footer>
      <div className="pointer-events-none absolute top-[113px] right-5 bottom-9 left-[50px] border-[5px] border-[#ef4023]" />
    </aside>
  );
}

export default function App() {
  return (
    <div className="relative h-screen overflow-hidden font-['Open_Sans','Noto_Sans_CJK_JP',sans-serif] text-[#1f1f1f]">
      <Page />
      <div className="absolute inset-0 flex bg-black/40 pt-[31px] pr-[348px] pb-[25px] pl-[346px]">
        <div
          role="dialog"
          aria-label="新しいイベント"
          className="flex min-w-0 flex-1 flex-col overflow-hidden rounded-lg bg-linear-to-b from-[#fafafa] from-90% to-[#f0f0f0] shadow-[0_0_16px_rgba(0,0,0,0.2),0_64px_128px_rgba(0,0,0,0.24)]"
        >
          <div className="flex h-24 shrink-0 items-center bg-[#e9e9e9] pr-9 pl-8 text-[#242424]">
            <h2 className="flex-1 text-[28px] text-[#424242]">新しいイベント - 予定表</h2>
            <button type="button" aria-label="新しいウィンドウで開く">
              <Icon className="size-7" box={28}>
                <path d="M12 1H6Q1 1 1 6v16q0 5 5 5h16q5 0 5-5v-6M17 1h10v10M27 1 16 12" />
              </Icon>
            </button>
            <button type="button" aria-label="閉じる" className="ml-[70px]">
              <Cross />
            </button>
          </div>
          <div className="flex min-h-0 flex-1 flex-col gap-5 px-8 pt-4 pb-8">
            <Toolbar />
            <div className="flex min-h-0 flex-1 gap-8">
              <div className="flex min-w-0 flex-1 flex-col gap-4">
                <EventForm />
                <Editor />
              </div>
              <AcallPanel />
            </div>
          </div>
        </div>
      </div>
    </div>
  );
}
